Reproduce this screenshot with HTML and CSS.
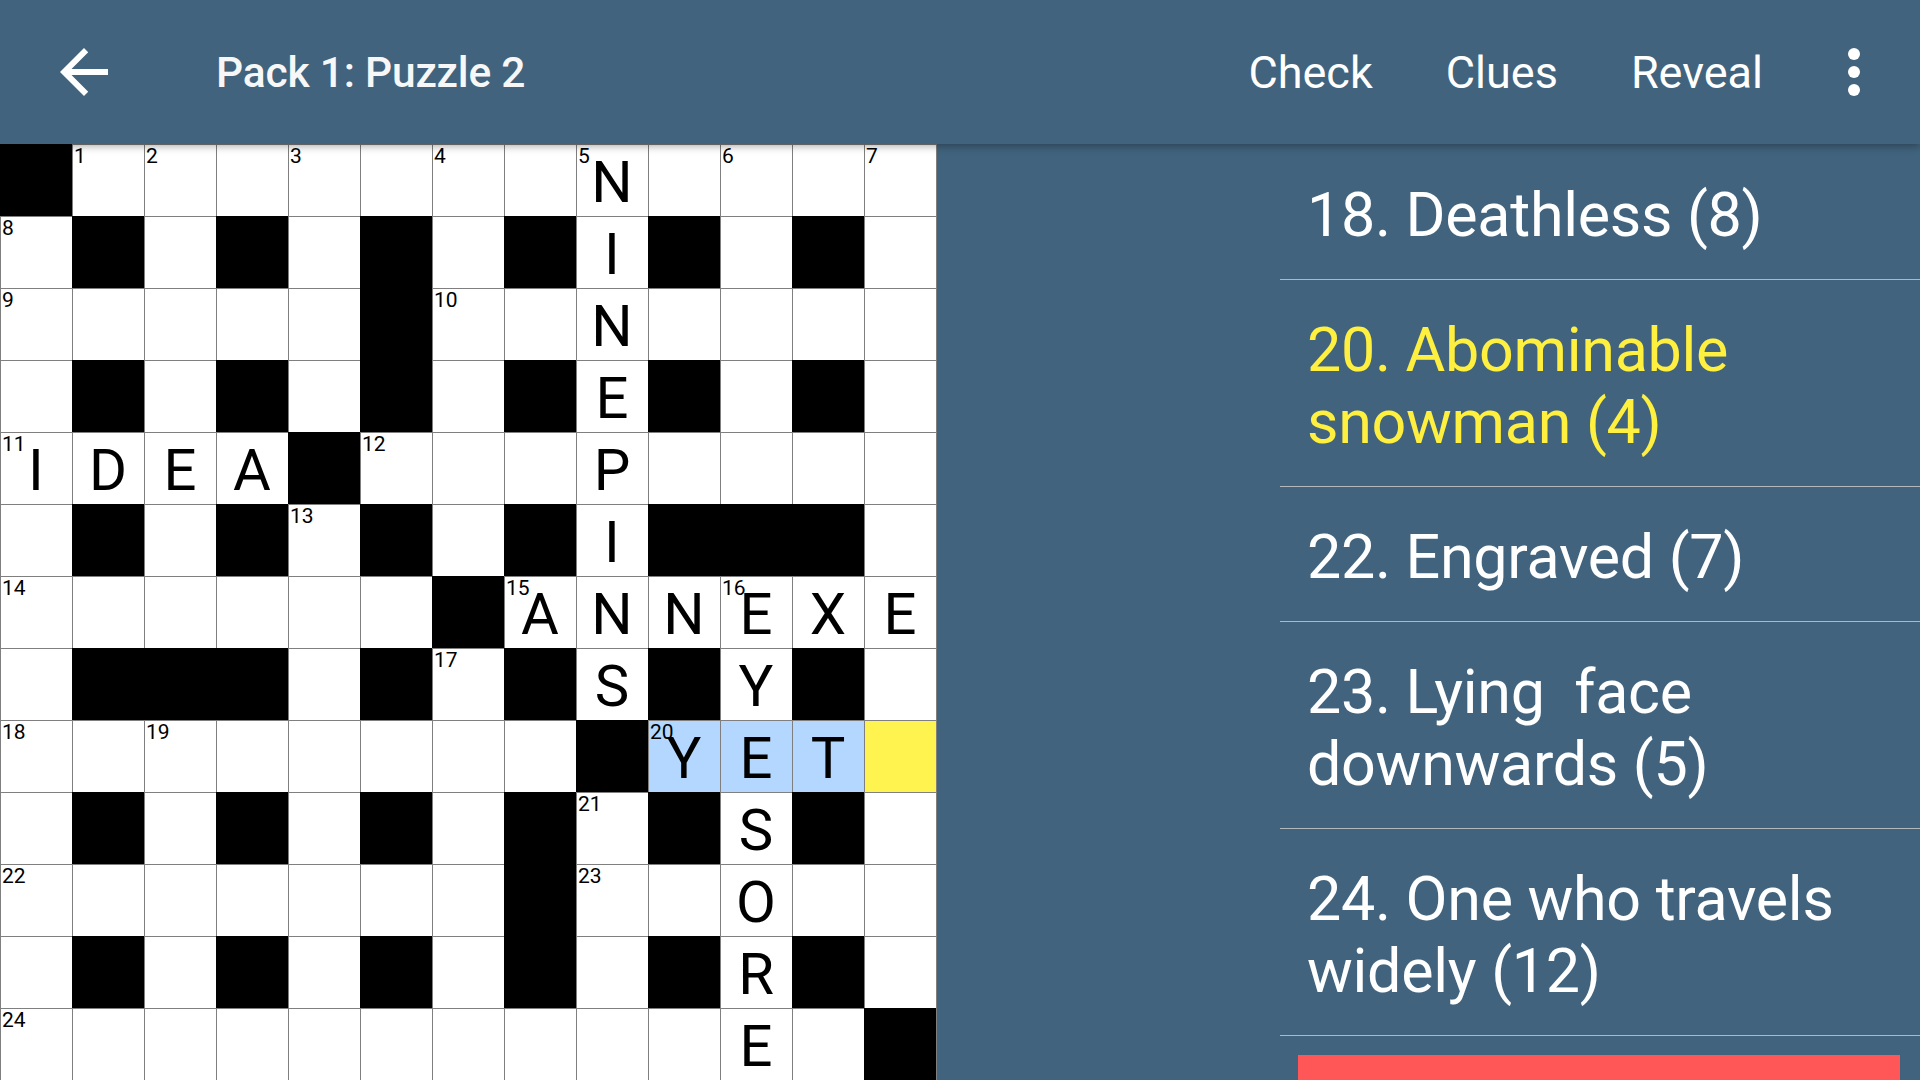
FILE: index.html
```html
<!DOCTYPE html>
<html lang="en">
<head>
<meta charset="utf-8">
<title>Pack 1: Puzzle 2</title>
<link rel="stylesheet" href="styles.css">
</head>
<body>
<header class="appbar">
  <svg class="icon back" viewBox="0 0 24 24" width="72" height="72"><path d="M20 11H7.83l5.59-5.59L12 4l-8 8 8 8 1.41-1.41L7.83 13H20v-2z" fill="#fff"/></svg>
  <h1 class="title">Pack 1: Puzzle 2</h1>
  <nav class="actions">
    <span class="action">Check</span>
    <span class="action">Clues</span>
    <span class="action last">Reveal</span>
    <svg class="icon more" viewBox="0 0 24 24" width="72" height="72"><circle cx="12" cy="6" r="2" fill="#fff"/><circle cx="12" cy="12" r="2" fill="#fff"/><circle cx="12" cy="18" r="2" fill="#fff"/></svg>
  </nav>
</header>
<main class="content">
  <div class="grid">
    <!-- row 0 -->
    <div class="b"></div><div class="c"><span class="n">1</span></div><div class="c"><span class="n">2</span></div><div class="c"></div><div class="c"><span class="n">3</span></div><div class="c"></div><div class="c"><span class="n">4</span></div><div class="c"></div><div class="c"><span class="n">5</span>N</div><div class="c"></div><div class="c"><span class="n">6</span></div><div class="c"></div><div class="c"><span class="n">7</span></div>
    <!-- row 1 -->
    <div class="c"><span class="n">8</span></div><div class="b"></div><div class="c"></div><div class="b"></div><div class="c"></div><div class="b"></div><div class="c"></div><div class="b"></div><div class="c">I</div><div class="b"></div><div class="c"></div><div class="b"></div><div class="c"></div>
    <!-- row 2 -->
    <div class="c"><span class="n">9</span></div><div class="c"></div><div class="c"></div><div class="c"></div><div class="c"></div><div class="b"></div><div class="c"><span class="n">10</span></div><div class="c"></div><div class="c">N</div><div class="c"></div><div class="c"></div><div class="c"></div><div class="c"></div>
    <!-- row 3 -->
    <div class="c"></div><div class="b"></div><div class="c"></div><div class="b"></div><div class="c"></div><div class="b"></div><div class="c"></div><div class="b"></div><div class="c">E</div><div class="b"></div><div class="c"></div><div class="b"></div><div class="c"></div>
    <!-- row 4 -->
    <div class="c"><span class="n">11</span>I</div><div class="c">D</div><div class="c">E</div><div class="c">A</div><div class="b"></div><div class="c"><span class="n">12</span></div><div class="c"></div><div class="c"></div><div class="c">P</div><div class="c"></div><div class="c"></div><div class="c"></div><div class="c"></div>
    <!-- row 5 -->
    <div class="c"></div><div class="b"></div><div class="c"></div><div class="b"></div><div class="c"><span class="n">13</span></div><div class="b"></div><div class="c"></div><div class="b"></div><div class="c">I</div><div class="b"></div><div class="b"></div><div class="b"></div><div class="c"></div>
    <!-- row 6 -->
    <div class="c"><span class="n">14</span></div><div class="c"></div><div class="c"></div><div class="c"></div><div class="c"></div><div class="c"></div><div class="b"></div><div class="c"><span class="n">15</span>A</div><div class="c">N</div><div class="c">N</div><div class="c"><span class="n">16</span>E</div><div class="c">X</div><div class="c">E</div>
    <!-- row 7 -->
    <div class="c"></div><div class="b"></div><div class="b"></div><div class="b"></div><div class="c"></div><div class="b"></div><div class="c"><span class="n">17</span></div><div class="b"></div><div class="c">S</div><div class="b"></div><div class="c">Y</div><div class="b"></div><div class="c"></div>
    <!-- row 8 -->
    <div class="c"><span class="n">18</span></div><div class="c"></div><div class="c"><span class="n">19</span></div><div class="c"></div><div class="c"></div><div class="c"></div><div class="c"></div><div class="c"></div><div class="b"></div><div class="c word"><span class="n">20</span>Y</div><div class="c word">E</div><div class="c word">T</div><div class="c cursor"></div>
    <!-- row 9 -->
    <div class="c"></div><div class="b"></div><div class="c"></div><div class="b"></div><div class="c"></div><div class="b"></div><div class="c"></div><div class="b"></div><div class="c"><span class="n">21</span></div><div class="b"></div><div class="c">S</div><div class="b"></div><div class="c"></div>
    <!-- row 10 -->
    <div class="c"><span class="n">22</span></div><div class="c"></div><div class="c"></div><div class="c"></div><div class="c"></div><div class="c"></div><div class="c"></div><div class="b"></div><div class="c"><span class="n">23</span></div><div class="c"></div><div class="c">O</div><div class="c"></div><div class="c"></div>
    <!-- row 11 -->
    <div class="c"></div><div class="b"></div><div class="c"></div><div class="b"></div><div class="c"></div><div class="b"></div><div class="c"></div><div class="b"></div><div class="c"></div><div class="b"></div><div class="c">R</div><div class="b"></div><div class="c"></div>
    <!-- row 12 -->
    <div class="c"><span class="n">24</span></div><div class="c"></div><div class="c"></div><div class="c"></div><div class="c"></div><div class="c"></div><div class="c"></div><div class="c"></div><div class="c"></div><div class="c"></div><div class="c">E</div><div class="c"></div><div class="b"></div>
  </div>
  <section class="clues">
    <ul class="clue-list">
      <li class="clue">18. Deathless (8)</li>
      <li class="clue active">20. Abominable snowman (4)</li>
      <li class="clue">22. Engraved (7)</li>
      <li class="clue">23. Lying&nbsp; face downwards (5)</li>
      <li class="clue">24. One who travels widely (12)</li>
    </ul>
    <div class="red-button"></div>
  </section>
</main>
</body>
</html>
```
FILE: styles.css
```css
* { box-sizing: border-box; }
html, body {
  margin: 0;
  padding: 0;
  width: 1920px;
  height: 1080px;
  overflow: hidden;
  background: #41637d;
  font-family: Roboto, "Liberation Sans", sans-serif;
}
.appbar {
  position: relative;
  z-index: 2;
  height: 144px;
  background: #41637d;
  display: flex;
  align-items: center;
  padding: 0 30px 0 48px;
  box-shadow: 0 2px 8px rgba(0, 0, 0, 0.35);
  color: #fff;
}
.icon { display: block; flex: none; }
.title {
  margin: 0 0 0 96px;
  font-size: 42.5px;
  font-weight: 500;
  color: #f7f7f7;
  letter-spacing: -0.2px;
}
.actions {
  margin-left: auto;
  display: flex;
  align-items: center;
}
.action {
  font-size: 45px;
  font-weight: 400;
  color: #fff;
  margin-right: 73px;
}
.action.last { margin-right: 55px; }
.content {
  display: flex;
  height: 936px;
}
.grid {
  flex: none;
  width: 937px;
  display: grid;
  grid-template-columns: repeat(13, 72px);
  grid-auto-rows: 72px;
  border-right: 1px solid #7f7f7f;
  background: #fff;
}
.grid > div {
  position: relative;
  text-align: center;
  font-size: 58px;
  line-height: 76px;
  color: #000;
  overflow: hidden;
}
.c {
  background: #fff;
  box-shadow: inset 1px 1px 0 #7f7f7f;
}
.b { background: #000; }
.c.word { background: #b4d7ff; }
.c.cursor { background: #fff350; }
.n {
  position: absolute;
  top: 0;
  left: 2px;
  font-size: 21px;
  line-height: 24px;
  color: #000;
}
.clues {
  flex: 1;
  padding: 1px 0 0 343px;
  background: #41637d;
}
.clue-list {
  list-style: none;
  margin: 0;
  padding: 0;
}
.clue {
  font-size: 61px;
  line-height: 72px;
  letter-spacing: -0.3px;
  color: #fff;
  padding: 34px 20px 28px 27px;
  border-bottom: 1px solid #b3b8bc;
}
.clue.active { color: #ffef3e; }
.red-button {
  margin: 19px 20px 0 18px;
  height: 60px;
  background: #ff5657;
}
```
